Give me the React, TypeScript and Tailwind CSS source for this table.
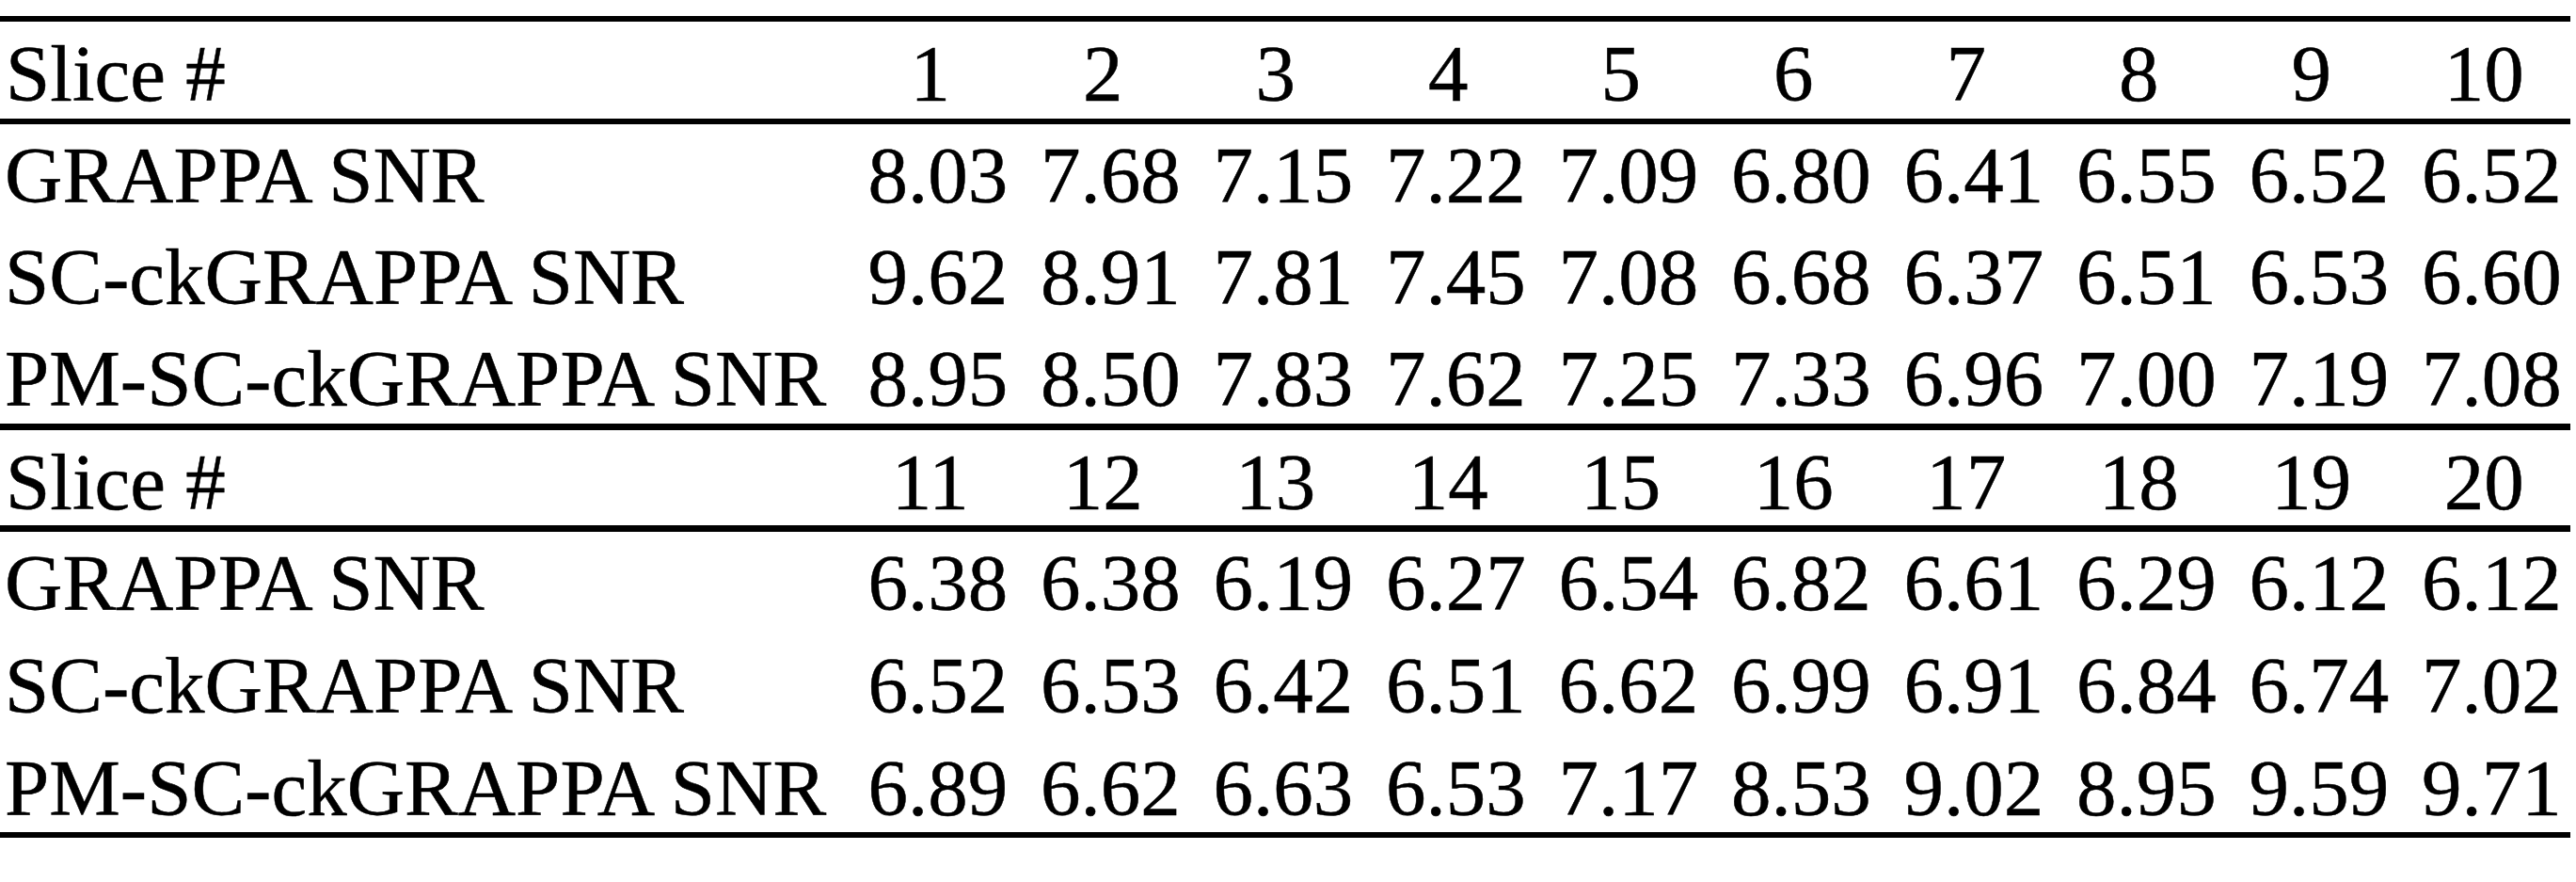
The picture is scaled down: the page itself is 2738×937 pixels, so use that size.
const sections = [
  {
    slices: ['1', '2', '3', '4', '5', '6', '7', '8', '9', '10'],
    rows: [
      { label: 'GRAPPA SNR', values: ['8.03', '7.68', '7.15', '7.22', '7.09', '6.80', '6.41', '6.55', '6.52', '6.52'] },
      { label: 'SC-ckGRAPPA SNR', values: ['9.62', '8.91', '7.81', '7.45', '7.08', '6.68', '6.37', '6.51', '6.53', '6.60'] },
      { label: 'PM-SC-ckGRAPPA SNR', values: ['8.95', '8.50', '7.83', '7.62', '7.25', '7.33', '6.96', '7.00', '7.19', '7.08'] },
    ],
  },
  {
    slices: ['11', '12', '13', '14', '15', '16', '17', '18', '19', '20'],
    rows: [
      { label: 'GRAPPA SNR', values: ['6.38', '6.38', '6.19', '6.27', '6.54', '6.82', '6.61', '6.29', '6.12', '6.12'] },
      { label: 'SC-ckGRAPPA SNR', values: ['6.52', '6.53', '6.42', '6.51', '6.62', '6.99', '6.91', '6.84', '6.74', '7.02'] },
      { label: 'PM-SC-ckGRAPPA SNR', values: ['6.89', '6.62', '6.63', '6.53', '7.17', '8.53', '9.02', '8.95', '9.59', '9.71'] },
    ],
  },
];

const rowHeights = [
  ['h-[108px]', 'h-[108px]', 'h-[102px]'],
  ['h-[109px]', 'h-[109px]', 'h-[101px]'],
];

function HeaderRow({ cells, height }: { cells: string[]; height: string }) {
  return (
    <div className={`grid grid-cols-[897px_repeat(10,183.5px)] ${height} pt-[13px]`}>
      <div className="pl-[6px] whitespace-nowrap">Slice #</div>
      {cells.map((c) => (
        <div key={c} className="text-center">
          {c}
        </div>
      ))}
    </div>
  );
}

function ValueRow({ label, cells, height }: { label: string; cells: string[]; height: string }) {
  return (
    <div className={`grid grid-cols-[897px_repeat(10,183.5px)] ${height} pt-[12px]`}>
      <div className="pl-[5px] whitespace-nowrap">{label}</div>
      {cells.map((c, i) => (
        <div key={i} className="text-center pl-4">
          {c}
        </div>
      ))}
    </div>
  );
}

export default function App() {
  return (
    <div className="w-[2738px] h-[937px] bg-white text-black pt-[17px] font-['Liberation_Serif','Times_New_Roman',serif] text-[85px] leading-none [-webkit-text-stroke:0.5px_black]">
      <div className="w-[2732px]">
        <div className="h-[6px] bg-black" />
        <HeaderRow cells={sections[0].slices} height="h-[103px]" />
        <div className="h-[6px] bg-black" />
        {sections[0].rows.map((r, i) => (
          <ValueRow key={r.label} label={r.label} cells={r.values} height={rowHeights[0][i]} />
        ))}
        <div className="h-[7px] bg-black" />
        <HeaderRow cells={sections[1].slices} height="h-[101px]" />
        <div className="h-[7px] bg-black" />
        {sections[1].rows.map((r, i) => (
          <ValueRow key={r.label} label={r.label} cells={r.values} height={rowHeights[1][i]} />
        ))}
        <div className="h-[6px] bg-black" />
      </div>
    </div>
  );
}
